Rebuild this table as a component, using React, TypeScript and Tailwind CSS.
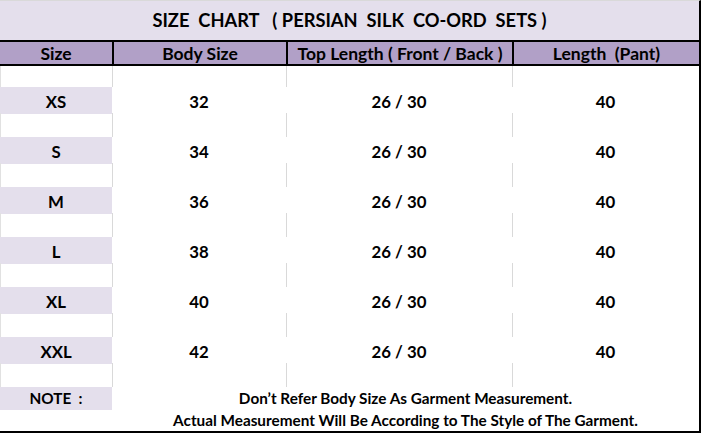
const rows = [
  { size: "XS", body: "32", top: "26 / 30", pant: "40" },
  { size: "S", body: "34", top: "26 / 30", pant: "40" },
  { size: "M", body: "36", top: "26 / 30", pant: "40" },
  { size: "L", body: "38", top: "26 / 30", pant: "40" },
  { size: "XL", body: "40", top: "26 / 30", pant: "40" },
  { size: "XXL", body: "42", top: "26 / 30", pant: "40" },
];

const cols = "grid grid-cols-[112px_174px_226px_187px]";

function GapRow({ h }: { h: string }) {
  return (
    <div className={`${cols} ${h}`}>
      <div className="border-l border-[#e1e1e1]" />
      <div className="border-l border-[#d9d9d9]" />
      <div className="border-l border-[#d9d9d9]" />
      <div className="border-l border-[#d9d9d9]" />
    </div>
  );
}

export default function App() {
  return (
    <div
      className="w-[701px] h-[435px] bg-white text-black font-bold"
      style={{ fontFamily: "Lato, 'Open Sans', sans-serif" }}
    >
      <div className="w-[701px] h-[433px] border-r-2 border-b-2 border-black border-t border-t-[#d9d9d9] flex flex-col">
        <div className="h-[39px] bg-[#e4dfec] flex items-center justify-center pt-px text-[18.3px] whitespace-pre">
          SIZE  CHART   ( PERSIAN  SILK  CO-ORD  SETS )
        </div>

        <div className={`${cols} h-[26px] bg-[#b1a0c7] border-y-2 border-black text-[17.5px] leading-none`}>
          <div className="flex items-center justify-center pt-px">Size</div>
          <div className="flex items-center justify-center pt-px border-l-2 border-black">Body Size</div>
          <div className="flex items-center justify-center pt-px border-l-2 border-black">
            Top Length ( Front / Back )
          </div>
          <div className="flex items-center justify-center pt-px border-l-2 border-black whitespace-pre">
            Length  (Pant)
          </div>
        </div>

        {rows.map((r, i) => (
          <div key={r.size}>
            <GapRow h={i === 0 ? "h-[21px]" : "h-[24px]"} />
            <div className={`${cols} h-[26px] text-[16.8px]`}>
              <div className="bg-[#e4dfec] flex items-center justify-center pt-[2px]">{r.size}</div>
              <div className="flex items-center justify-center pt-[2px]">{r.body}</div>
              <div className="flex items-center justify-center pt-[2px]">{r.top}</div>
              <div className="flex items-center justify-center pt-[2px]">{r.pant}</div>
            </div>
          </div>
        ))}

        <GapRow h="h-[24px]" />

        <div className={`${cols} h-[22px] text-[15.3px]`}>
          <div className="bg-[#e4dfec] flex items-center justify-center whitespace-pre">NOTE  :</div>
          <div className="col-span-3 flex items-center justify-center">
            Don’t Refer Body Size As Garment Measurement.
          </div>
        </div>
        <div className={`${cols} h-[22px] text-[15.3px]`}>
          <div />
          <div className="col-span-3 flex items-center justify-center">
            Actual Measurement Will Be According to The Style of The Garment.
          </div>
        </div>
      </div>
    </div>
  );
}
